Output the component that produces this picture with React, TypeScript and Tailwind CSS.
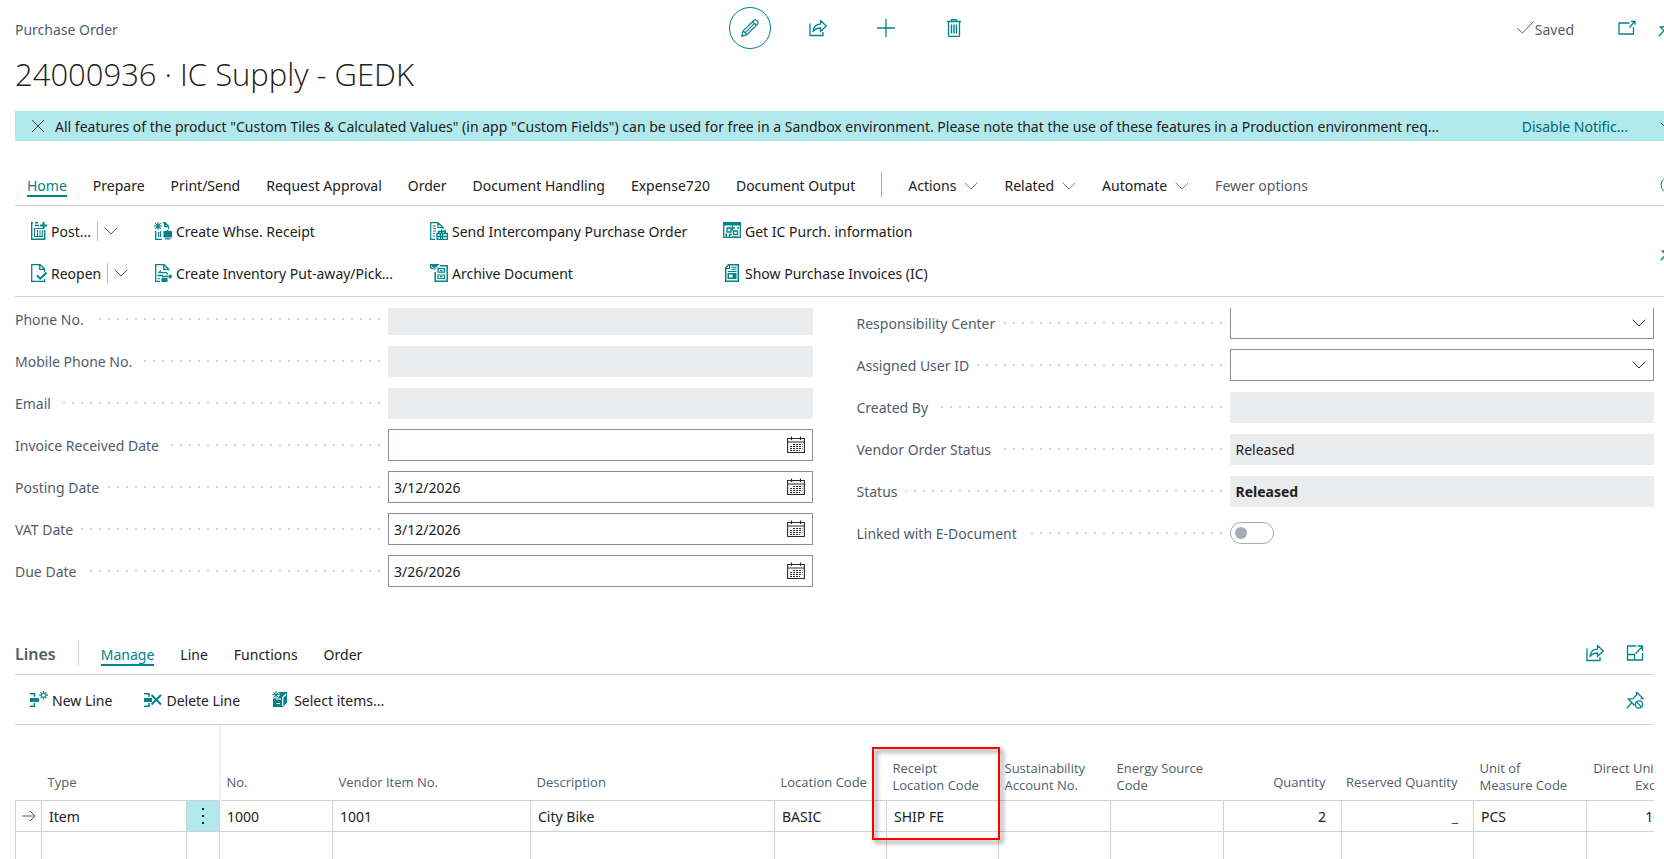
import { useState, type ReactNode } from "react";

type IconProps = { className?: string };

const teal = "text-[#00838a]";

function Icon({ className = "", children, w = 18 }: { className?: string; children: ReactNode; w?: number }) {
  return (
    <svg
      viewBox={`0 0 ${w} 18`}
      width={w}
      height={18}
      fill="none"
      stroke="currentColor"
      className={`shrink-0 ${className}`}
      aria-hidden="true"
    >
      {children}
    </svg>
  );
}

function Chevron({ className = "text-[#505c6d]" }: IconProps) {
  return (
    <svg viewBox="0 0 14 8" width={14} height={8} fill="none" stroke="currentColor" className={`shrink-0 ${className}`} aria-hidden="true">
      <path d="M.7.7 7 7 13.300.7" />
    </svg>
  );
}

function PencilIcon() {
  return (
    <Icon>
      <path
        d="M.8 17.200l1.400-5.400L13 1.200c1.800-1.300 5 1.800 3.700 3.700L6 15.700z M2.200 11.800 6 15.700 M11.700 2.600l3.800 3.800 M4.300 13.700 13.300 4.700"
        strokeWidth="1.200"
      />
    </Icon>
  );
}

function ShareIcon() {
  return (
    <Icon>
      <path d="M1 4.500V16.500h13V13" strokeWidth="1.300" />
      <path d="M4 12.500c.6-5 3-7.300 7.500-7.400V1.500L17.300 7l-5.800 5.500V9c-3.500 0-5.500 1-7.500 3.500z" strokeWidth="1.300" strokeLinejoin="round" />
    </Icon>
  );
}

function PlusIcon() {
  return (
    <Icon>
      <path d="M9 0v18M0 9h18" strokeWidth="1.300" />
    </Icon>
  );
}

function TrashIcon() {
  return (
    <Icon>
      <path d="M2 2.500h14M6.500 2.500V.5h5v2M3.500 2.500v14q0 1 1 1h9q1 0 1-1v-14" strokeWidth="1.300" />
      <path d="M6.500 5.500v9M9 5.500v9M11.500 5.500v9" strokeWidth="1.400" />
    </Icon>
  );
}

function PopOutIcon() {
  return (
    <Icon>
      <path d="M11.500 4H1v11h14.500V8M11.500 8.500l5-6M13 2.300h4v3.500" strokeWidth="1.300" />
    </Icon>
  );
}

function PinIcon() {
  return (
    <Icon>
      <path d="M10.500 1 17 7.500l-2.500.3M10.500 1v3L7 7.700 2.300 8 8.500 14.500M6 11.500.8 17.200" strokeWidth="1.300" />
      <circle cx="13" cy="13.500" r="3.700" strokeWidth="1.300" />
      <path d="M10.400 11l5.200 5" strokeWidth="1.300" />
    </Icon>
  );
}

function ExpandIcon() {
  return (
    <Icon>
      <path d="M10 2H1.500v14h15V9M1.500 10.500h7V16M9.500 9.500 16 3M11.500 2h5v5" strokeWidth="1.300" />
    </Icon>
  );
}

function PostIcon() {
  return (
    <Icon w={16}>
      <path d="M.7 0v17.300h13V8M0 .7h2M4 .7h3M4 3.500h4" strokeWidth="1.400" />
      <path d="M12.500 0v7M9 3.500h7" strokeWidth="2" />
      <path d="M3.500 14.500v-8M3 6.500h9M6.500 14.500V8M9 14.500V8M11.300 14.500V8M3 14.500h9" />
    </Icon>
  );
}

function ReopenIcon() {
  return (
    <Icon w={16}>
      <path d="M13.500 8V5L9 .7H.7v16.600h12.800V15M8.700 1v4.300h4.500" strokeWidth="1.300" />
      <path d="M6 11.500l3.200 3.200L15.500 8.500" strokeWidth="2" />
    </Icon>
  );
}

function WhseReceiptIcon() {
  return (
    <Icon>
      <path d="M4 0v8M0 4h8M1.200 1.200l5.600 5.600M6.800 1.200 1.200 6.800" strokeWidth="1.100" />
      <path d="M1.700 9v8.300H8M9 .7h2l3.500 3.500v3M10.700 1v3.500h3M4.500 10v5M6.500 9v6" strokeWidth="1.300" />
      <path d="M9.500 9h3V8h2v1H18v6.500H9.500zM11 16.200h5.500v1.300H11z" fill="currentColor" stroke="none" />
    </Icon>
  );
}

function PutAwayIcon() {
  return (
    <Icon>
      <path d="M14.500 6.500V5L10 .7H1.700v16.600H6M9.700 1v4.300h4.500" strokeWidth="1.300" />
      <path d="M7 6.500 4.500 9M4.500 8.700H12q1.500 0 1.500 2M3.500 11.500H9M8 12.500h10M15.500 10.500l2 2-2 2" strokeWidth="1.300" />
      <path d="M7.500 14h6v4h-6z" fill="currentColor" stroke="none" />
      <path d="M3.500 14.700h2.500" />
    </Icon>
  );
}

function SendIcon() {
  return (
    <Icon>
      <path d="M5 17.300H.7V.7H8L13 5.500V7M8 1v4.500h4.500M3 4h3M3 6.500h3M3 9h3M3 11.500h2M3 14h2" strokeWidth="1.200" />
      <path d="M7 17.500v-6h3.500v6M12.500 17.500v-6h5v6M8 9.500h8M8.500 9.500v2M15 7.500v4M11.500 7.500v4M6.500 14.500h11M6.500 17.300H18" strokeWidth="1.300" />
    </Icon>
  );
}

function ArchiveIcon() {
  return (
    <Icon>
      <path d="M0 0h9.500L7 4 4.500 6 0 4z" fill="currentColor" stroke="none" />
      <path d="M1 2 4.500 5l4-3.500" stroke="white" />
      <path d="M5.200 8v9.300h12V1.700H10" strokeWidth="1.500" />
      <path d="M8 4.700h6.500v3.500H8zM8 11h6.500v3.500H8zM10 6.500h2.500M10 12.700h2.500" strokeWidth="1.200" />
    </Icon>
  );
}

function GetInfoIcon() {
  return (
    <Icon>
      <path d="M0 0h18v3.500H0z" fill="currentColor" stroke="none" />
      <path
        d="M.7 3v12.300h16.600V3M4 6h4v4H4zM10.500 9h4v3.500h-4zM10 6h2M14 6h2M2 12.500h2M6 12.500h3M3.500 13v2M6.500 13v2M9.500 14v1.500M12 14v1.500M14.500 14v1.500M9.500 3.500v5"
        strokeWidth="1.300"
      />
    </Icon>
  );
}

function InvoiceIcon() {
  return (
    <Icon>
      <path d="M5.500.7h9.800v16.600H2.700V4z" strokeWidth="1.500" />
      <path d="M3 4.500h3.500V1M8.500 3.200h5M8.500 5.200h5M5 7.500h8.500" strokeWidth="1.100" />
      <path d="M4.500 9h9v6h-9z" fill="currentColor" stroke="none" />
      <path d="M6 10.500h3.500v3H6z" fill="white" stroke="none" />
    </Icon>
  );
}

function NewLineIcon() {
  return (
    <Icon>
      <path d="M0 2.700h4.500v3M0 15.300h4.500V12" strokeWidth="1.500" />
      <path d="M0 7h9v4H0z" fill="currentColor" stroke="none" />
      <path d="M13.500 0v8.500M9.200 4.200H18M10.500 1.200l6 6M16.500 1.200l-6 6" strokeWidth="1.200" />
      <circle cx="13.500" cy="4.200" r="2" fill="white" />
    </Icon>
  );
}

function DeleteLineIcon() {
  return (
    <Icon>
      <path d="M0 2.700h5v3M0 15.300h5V12" strokeWidth="1.500" />
      <path d="M0 7h8v4H0z" fill="currentColor" stroke="none" />
      <path d="M7.500 4 17 13.500M17 4l-9.500 9.500" strokeWidth="2" />
    </Icon>
  );
}

function SelectItemsIcon() {
  return (
    <Icon>
      <path d="M1 8V16h10l4-4.500V1H7l-1 2" fill="currentColor" stroke="none" />
      <path d="M4 8h5M10.700 15V6.500L14 3M4.500 12.500h3.500" stroke="white" strokeWidth="1.200" />
      <path d="M4 0v7.500M.3 3.700h7.500M1.300 1.200l5.200 5.200M6.500 1.200 1.300 6.400" stroke="white" strokeWidth="2.500" />
      <path d="M4 0v7.500M.3 3.700h7.500M1.300 1.200l5.200 5.200M6.500 1.200 1.300 6.400" />
    </Icon>
  );
}

function CalendarIcon() {
  return (
    <Icon className="text-[#2b2b2b]">
      <path d="M.6 2.500h16.800v14H.6zM.6 6h16.800M4.500.5v3.500M13.500.5v3.500" strokeWidth="1.100" />
      <path d="M6 8.500h9.500M3 10.500h12.500M3 12.500h12.500M3 14.500h10" strokeDasharray="2 1" strokeWidth="1.100" />
    </Icon>
  );
}

function IconButton({ label, children }: { label: string; children: ReactNode }) {
  return (
    <button type="button" aria-label={label} className={`flex h-[18px] w-[18px] items-center justify-center ${teal}`}>
      {children}
    </button>
  );
}

function Tabs({ items, active, onSelect }: { items: string[]; active: string; onSelect: (tab: string) => void }) {
  return (
    <div className="flex shrink-0 gap-[26px]">
      {items.map((item) => (
        <button
          key={item}
          type="button"
          onClick={() => onSelect(item)}
          className={`h-5 shrink-0 border-b-2 leading-[18px] whitespace-nowrap ${
            active === item ? "border-[#00838a] text-[#00838a]" : "border-transparent"
          }`}
        >
          {item}
        </button>
      ))}
    </div>
  );
}

function Action({ icon, label, split }: { icon: ReactNode; label: string; split?: boolean }) {
  return (
    <div className="flex h-[42px] items-center">
      <button type="button" className="flex items-center gap-1 whitespace-nowrap">
        <span className={teal}>{icon}</span>
        <span className="pt-0.5">{label}</span>
      </button>
      {split ? (
        <button type="button" aria-label={`${label} options`} className="ml-1.5 flex h-5 items-center border-l border-[#b8bcc4] pl-1.5">
          <Chevron />
        </button>
      ) : null}
    </div>
  );
}

type FieldKind = "readonly" | "date" | "select" | "toggle";

function Field({ label, kind, value = "", strong }: { label: string; kind: FieldKind; value?: string; strong?: boolean }) {
  const id = label.toLowerCase().replace(/[^a-z]+/g, "-");
  return (
    <div className="flex h-8 items-center">
      <div className="flex w-[373px] shrink-0 items-center gap-2 pr-2">
        <label htmlFor={id} className="pt-0.5 whitespace-nowrap text-[#505c6d]">
          {label}
        </label>
        <span className="h-0.5 flex-1 bg-[repeating-linear-gradient(to_left,#d0d3d8_0_2px,transparent_2px_9px)]" />
      </div>
      {kind === "readonly" ? (
        <input
          id={id}
          readOnly
          defaultValue={value}
          className={`h-[31px] min-w-0 flex-1 bg-[#ebecee] px-1.5 outline-none ${strong ? "font-bold" : ""}`}
        />
      ) : null}
      {kind === "date" ? (
        <div className="flex h-8 min-w-0 flex-1 items-center border border-[#8a929e] pr-[7px] pl-[5px]">
          <input id={id} defaultValue={value} className="min-w-0 flex-1 pt-0.5 outline-none" />
          <button type="button" aria-label={`Choose ${label}`}>
            <CalendarIcon />
          </button>
        </div>
      ) : null}
      {kind === "select" ? (
        <div className="relative h-8 min-w-0 flex-1">
          <select id={id} className="h-full w-full appearance-none border border-[#8a929e] px-1.5 outline-none">
            <option value="" />
          </select>
          <span className="pointer-events-none absolute inset-y-0 right-2 flex items-center">
            <Chevron className="text-[#2b2b2b]" />
          </span>
        </div>
      ) : null}
      {kind === "toggle" ? (
        <input
          id={id}
          type="checkbox"
          role="switch"
          className="h-[22px] w-11 appearance-none rounded-full border border-[#a5abb7] p-1 before:block before:h-3 before:w-3 before:rounded-full before:bg-[#a5abb7] checked:before:ml-auto"
        />
      ) : null}
    </div>
  );
}

const ribbonTabs = ["Home", "Prepare", "Print/Send", "Request Approval", "Order", "Document Handling", "Expense720", "Document Output"];
const ribbonMenus = ["Actions", "Related", "Automate"];
const lineTabs = ["Manage", "Line", "Functions", "Order"];

type Column = { name: string; width: string; value?: string; right?: boolean; marked?: boolean };

const columns: Column[] = [
  { name: "No.", width: "w-[113px]", value: "1000" },
  { name: "Vendor Item No.", width: "w-[198px]", value: "1001" },
  { name: "Description", width: "w-[244px]", value: "City Bike" },
  { name: "Location Code", width: "w-[112px]", value: "BASIC" },
  { name: "Receipt\nLocation Code", width: "w-[112px]", value: "SHIP FE", marked: true },
  { name: "Sustainability\nAccount No.", width: "w-[112px]" },
  { name: "Energy Source\nCode", width: "w-[113px]" },
  { name: "Quantity", width: "w-[118px]", value: "2", right: true },
  { name: "Reserved Quantity", width: "w-[132px]", value: "_", right: true },
  { name: "Unit of\nMeasure Code", width: "w-[113px]", value: "PCS" },
  { name: "Direct Unit Cost\nExcl. VAT", width: "w-[118px]", value: "100.00", right: true },
];

const cell = "border border-[#d0d3d8] whitespace-nowrap";

function LinesTable() {
  return (
    <div className="overflow-hidden">
      <table className="w-[1689px] table-fixed border-collapse">
        <colgroup>
          <col className="w-[26px]" />
          <col className="w-[145px]" />
          <col className="w-[33px]" />
          {columns.map((c) => (
            <col key={c.name} className={c.width} />
          ))}
        </colgroup>
        <thead>
          <tr className="h-[75px] font-['Open_Sans',sans-serif] text-[13px] leading-[17px] text-[#505c6d]">
            <td />
            <th className="pt-10 pl-1.5 text-left font-normal">Type</th>
            <td />
            {columns.map((c, i) => (
              <th
                key={c.name}
                className={`relative font-normal whitespace-pre ${c.name.includes("\n") ? "pt-[30px]" : "pt-10"} ${
                  c.right ? "pr-4 text-right" : "pl-1.5 text-left"
                } ${i === 0 ? "border-l-2 border-[#f1f2f3]" : ""}`}
              >
                {c.name}
                {c.marked ? (
                  <span className="pointer-events-none absolute top-[22px] -right-px -left-[15px] h-[93px] border-2 border-[#ff0000] drop-shadow-[3px_3px_2px_rgba(0,0,0,0.5)]" />
                ) : null}
              </th>
            ))}
          </tr>
        </thead>
        <tbody>
          <tr className="h-[31px]">
            <td className={cell}>
              <svg viewBox="0 0 14 12" width={14} height={12} fill="none" stroke="#505c6d" className="mx-auto" aria-hidden="true">
                <path d="M0 6h13M8 1l5 5-5 5" />
              </svg>
            </td>
            <td className={`${cell} pt-0.5 pl-[7px]`}>Item</td>
            <td className={`${cell} bg-[#b2e9ec]`}>
              <button type="button" aria-label="Show more options" className="flex w-full justify-center">
                <svg viewBox="0 0 4 18" width={4} height={18} fill="#212121" aria-hidden="true">
                  <path d="M1 1h2v2H1zM1 8h2v2H1zM1 15h2v2H1z" />
                </svg>
              </button>
            </td>
            {columns.map((c) => (
              <td key={c.name} className={`${cell} pt-0.5 ${c.right ? "pr-[15px] text-right" : "pl-[7px]"} ${c.value === "_" ? "text-[#00666d]" : ""}`}>
                {c.value}
              </td>
            ))}
          </tr>
          <tr className="h-[31px]">
            <td className={cell} />
            <td className={cell} />
            <td className={cell} />
            {columns.map((c) => (
              <td key={c.name} className={cell} />
            ))}
          </tr>
        </tbody>
      </table>
    </div>
  );
}

export default function App() {
  const [tab, setTab] = useState("Home");
  const [lineTab, setLineTab] = useState("Manage");

  return (
    <div className="h-screen overflow-hidden bg-white pl-[15px] font-['Noto_Sans','Open_Sans',sans-serif] text-[14px] leading-5 text-[#212121]">
      <header className="-mr-3 grid h-[52px] grid-cols-[1fr_auto_1fr] items-center pt-1">
        <span className="pt-1 text-[#505c6d]">Purchase Order</span>
        <div className="flex items-center gap-[50px]">
          <button type="button" aria-label="Edit" className={`-mr-3 flex h-[42px] w-[42px] items-center justify-center rounded-full border ${teal}`}>
            <PencilIcon />
          </button>
          <IconButton label="Share">
            <ShareIcon />
          </IconButton>
          <IconButton label="New">
            <PlusIcon />
          </IconButton>
          <IconButton label="Delete">
            <TrashIcon />
          </IconButton>
        </div>
        <div className="flex items-center justify-end">
          <span className="mr-11 flex items-center text-[#505c6d]">
            <Icon>
              <path d="M.5 9.500 5.500 14 16.500 2.500" />
            </Icon>
            <span className="pt-1">Saved</span>
          </span>
          <div className="flex gap-[22px]">
            <IconButton label="Open in new window">
              <PopOutIcon />
            </IconButton>
            <IconButton label="Pin">
              <PinIcon />
            </IconButton>
          </div>
        </div>
      </header>

      <h1 className="h-[59px] font-['Open_Sans',sans-serif] text-[31px] leading-[44px] font-light">24000936 · IC Supply - GEDK</h1>

      <div className="flex h-[30px] items-center bg-[#b2e9ec] whitespace-nowrap">
        <button type="button" aria-label="Dismiss" className="ml-3.5 text-[#3b4350]">
          <Icon>
            <path d="M3 3l12 12M15 3 3 15" />
          </Icon>
        </button>
        <p className="ml-2 flex-1 pt-0.5">
          All features of the product "Custom Tiles &amp; Calculated Values" (in app "Custom Fields") can be used for free in a Sandbox
          environment. Please note that the use of these features in a Production environment req...
        </p>
        <a href="#disable" className="mr-8 pt-0.5 text-[#00666d]">
          Disable Notific...
        </a>
        <button type="button" aria-label="More notifications" className="-mr-2.5">
          <Chevron className="text-[#00666d]" />
        </button>
      </div>

      <nav className="flex h-[65px] items-end gap-[26px] border-b border-[#d0d3d8] pb-2 pl-3">
        <Tabs items={ribbonTabs} active={tab} onSelect={setTab} />
        <span className="h-[25px] w-px shrink-0 bg-[#a5abb7]" />
        {ribbonMenus.map((m) => (
          <button key={m} type="button" className="flex h-5 shrink-0 items-center gap-2 border-b-2 border-transparent leading-[18px]">
            {m}
            <Chevron className="text-[#7b8390]" />
          </button>
        ))}
        <button type="button" className="h-5 shrink-0 border-b-2 border-transparent leading-[18px] whitespace-nowrap text-[#505c6d]">
          Fewer options
        </button>
        <button type="button" aria-label="Information" className={`-mr-3.5 ml-auto h-6 shrink-0 ${teal}`}>
          <Icon>
            <circle cx="9" cy="9" r="8" />
          </Icon>
        </button>
      </nav>

      <div className="flex h-[91px] items-center border-b border-[#d0d3d8] pt-0.5 pl-4">
        <div className="grid grid-cols-[123px_276px_293px_auto]">
          <Action icon={<PostIcon />} label="Post..." split />
          <Action icon={<WhseReceiptIcon />} label="Create Whse. Receipt" />
          <Action icon={<SendIcon />} label="Send Intercompany Purchase Order" />
          <Action icon={<GetInfoIcon />} label="Get IC Purch. information" />
          <Action icon={<ReopenIcon />} label="Reopen" split />
          <Action icon={<PutAwayIcon />} label="Create Inventory Put-away/Pick..." />
          <Action icon={<ArchiveIcon />} label="Archive Document" />
          <Action icon={<InvoiceIcon />} label="Show Purchase Invoices (IC)" />
        </div>
        <button type="button" aria-label="Pin action bar" className={`-mr-3.5 ml-auto shrink-0 ${teal}`}>
          <PinIcon />
        </button>
      </div>

      <main className="pr-2.5">
        <section className="mt-[11px] grid h-[279px] grid-cols-2 gap-11 overflow-hidden">
          <div className="-mt-[5px] flex flex-col gap-2.5">
            <Field label="Phone No." kind="readonly" />
            <Field label="Mobile Phone No." kind="readonly" />
            <Field label="Email" kind="readonly" />
            <Field label="Invoice Received Date" kind="date" />
            <Field label="Posting Date" kind="date" value="3/12/2026" />
            <Field label="VAT Date" kind="date" value="3/12/2026" />
            <Field label="Due Date" kind="date" value="3/26/2026" />
          </div>
          <div className="-mt-px flex flex-col gap-2.5">
            <Field label="Responsibility Center" kind="select" />
            <Field label="Assigned User ID" kind="select" />
            <Field label="Created By" kind="readonly" />
            <Field label="Vendor Order Status" kind="readonly" value="Released" />
            <Field label="Status" kind="readonly" value="Released" strong />
            <Field label="Linked with E-Document" kind="toggle" />
          </div>
        </section>

        <section className="mt-11">
          <div className="flex h-11 items-end gap-[22px] border-b border-[#d0d3d8] pb-2">
            <h2 className="h-[22px] text-[16px] font-semibold text-[#505c6d]">Lines</h2>
            <span className="h-[25px] w-px bg-[#d0d3d8]" />
            <Tabs items={lineTabs} active={lineTab} onSelect={setLineTab} />
            <div className="mr-2.5 ml-auto flex gap-[22px] pb-1">
              <IconButton label="Share lines">
                <ShareIcon />
              </IconButton>
              <IconButton label="Expand lines">
                <ExpandIcon />
              </IconButton>
            </div>
          </div>
          <div className="flex h-[50px] items-center gap-8 border-b border-[#d0d3d8] pr-2.5 pl-[15px]">
            <Action icon={<NewLineIcon />} label="New Line" />
            <Action icon={<DeleteLineIcon />} label="Delete Line" />
            <Action icon={<SelectItemsIcon />} label="Select items..." />
            <div className="ml-auto">
              <IconButton label="Unpin">
                <PinIcon />
              </IconButton>
            </div>
          </div>
          <LinesTable />
        </section>
      </main>
    </div>
  );
}
